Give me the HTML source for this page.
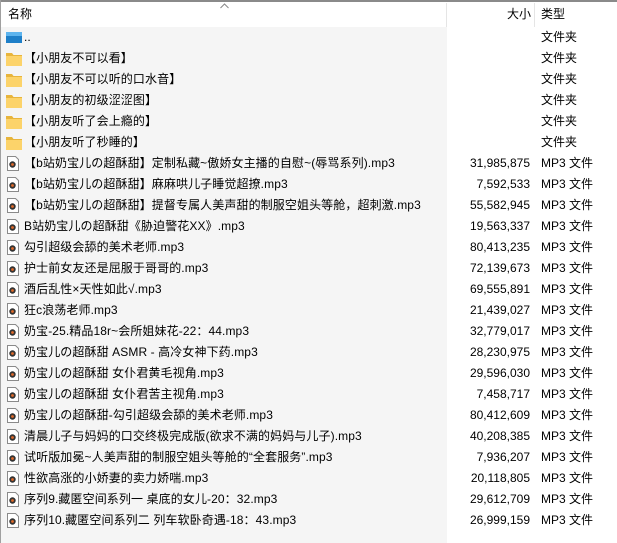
<!DOCTYPE html>
<html><head><meta charset="utf-8"><style>
body{margin:0;width:617px;height:543px;overflow:hidden;background:#fff;font-family:"Liberation Sans","Noto Sans CJK SC",sans-serif;font-size:12px;color:#000;position:relative}
.top{position:absolute;left:0;top:0;width:617px;height:2px;background:#8a8a8a}
.lb{position:absolute;left:0;top:0;width:1px;height:543px;background:#a0a0a0}
.namecol{position:absolute;left:1px;top:27px;width:446px;height:516px;background:#f5f5f5}
.hd{position:absolute;top:5px;font-size:12px}
.sep{position:absolute;top:3px;width:1px;height:24px;background:#e5e5e5}
.row{position:absolute;left:0;height:21px;width:617px;line-height:21px}
.row .n{position:absolute;left:24px;white-space:nowrap;letter-spacing:0.1px}
.row .s{position:absolute;right:87px}
.row .t{position:absolute;left:541px}
.ic{position:absolute;left:6px;top:4px}
</style></head><body>
<div class="top"></div><div class="lb"></div>
<div class="namecol"></div>
<div class="hd" style="left:8px">名称</div>
<svg style="position:absolute;left:220px;top:3px" width="9" height="6" viewBox="0 0 9 6"><path d="M.5 5 4.5 1 8.5 5" fill="none" stroke="#888"/></svg>
<div class="sep" style="left:446px"></div>
<div class="hd" style="left:507px">大小</div>
<div class="sep" style="left:534px"></div>
<div class="hd" style="left:541px">类型</div>
<div id="rows"></div>
<script>
var F='<svg class="ic" width="16" height="14" viewBox="0 0 16 14"><path d="M0 1h6l1.5 2H16v11H0z" fill="#e8b53c"/><path d="M0 4h16v10H0z" fill="#fcd36a"/></svg>';
var U='<svg class="ic" width="16" height="14" viewBox="0 0 16 14"><rect x="0" y="1" width="16" height="11" fill="#1e7fc8"/><rect x="0" y="1" width="16" height="4" fill="#5db4ee"/></svg>';
var M='<svg class="ic" style="left:7px;top:3px" width="12" height="15" viewBox="0 0 12 15"><path d="M.5.5h8l3 3v11H.5z" fill="#fff" stroke="#8a8a8a"/><circle cx="5.5" cy="8.5" r="3.2" fill="#333"/><circle cx="5.5" cy="8.5" r="1.4" fill="#e06a2a"/></svg>';
var d=[["..","", "文件夹",U],
["【小朋友不可以看】","","文件夹",F],
["【小朋友不可以听的口水音】","","文件夹",F],
["【小朋友的初级涩涩图】","","文件夹",F],
["【小朋友听了会上瘾的】","","文件夹",F],
["【小朋友听了秒睡的】","","文件夹",F],
["【b站奶宝儿の超酥甜】定制私藏~傲娇女主播的自慰~(辱骂系列).mp3","31,985,875"],
["【b站奶宝儿の超酥甜】麻麻哄儿子睡觉超撩.mp3","7,592,533"],
["【b站奶宝儿の超酥甜】提督专属人美声甜的制服空姐头等舱，超刺激.mp3","55,582,945"],
["B站奶宝儿の超酥甜《胁迫警花XX》.mp3","19,563,337"],
["勾引超级会舔的美术老师.mp3","80,413,235"],
["护士前女友还是屈服于哥哥的.mp3","72,139,673"],
["酒后乱性×天性如此√.mp3","69,555,891"],
["狂c浪荡老师.mp3","21,439,027"],
["奶宝-25.精品18r~会所姐妹花-22：44.mp3","32,779,017"],
["奶宝儿の超酥甜 ASMR - 高冷女神下药.mp3","28,230,975"],
["奶宝儿の超酥甜 女仆君黄毛视角.mp3","29,596,030"],
["奶宝儿の超酥甜 女仆君苦主视角.mp3","7,458,717"],
["奶宝儿の超酥甜-勾引超级会舔的美术老师.mp3","80,412,609"],
["清晨儿子与妈妈的口交终极完成版(欲求不满的妈妈与儿子).mp3","40,208,385"],
["试听版加冕~人美声甜的制服空姐头等舱的“全套服务”.mp3","7,936,207"],
["性欲高涨的小娇妻的卖力娇喘.mp3","20,118,805"],
["序列9.藏匿空间系列一 桌底的女儿-20：32.mp3","29,612,709"],
["序列10.藏匿空间系列二 列车软卧奇遇-18：43.mp3","26,999,159"]];
var h='';d.forEach(function(r,i){h+='<div class="row" style="top:'+(27+i*21)+'px">'+(r[3]||M)+'<span class="n">'+r[0]+'</span><span class="s">'+r[1]+'</span><span class="t">'+(r[2]||'MP3 文件')+'</span></div>';});
document.getElementById('rows').innerHTML=h;
</script>
</body></html>
